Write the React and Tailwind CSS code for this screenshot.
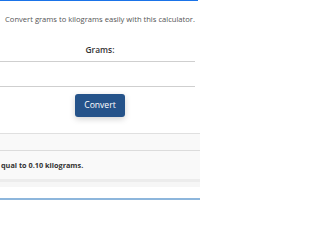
export default function App() {
  return (
    <div
      className="w-[200px] h-[200px] overflow-hidden bg-white flex flex-col"
      style={{ fontFamily: '"Open Sans", "Noto Sans", sans-serif' }}
    >
      <div className="h-px w-[198px] bg-[#1a73e8] shrink-0" />
      <p className="mt-[12px] h-[12px] leading-[12px] text-[7.6px] text-[#555] text-center whitespace-nowrap">
        Convert grams to kilograms easily with this calculator.
      </p>
      <label className="mt-[19px] h-[12px] leading-[12px] text-[8.4px] font-semibold text-[#333] text-center">
        Grams:
      </label>
      <input
        type="text"
        className="mt-[5px] w-[195px] h-[26px] border-y border-[#cfcfcf] bg-white outline-none shrink-0"
      />
      <div className="mt-[7px] flex justify-center">
        <button className="w-[50px] h-[23px] rounded-[3px] bg-[#25538a] text-white text-[8.6px] shadow-[0_2px_6px_rgba(0,0,0,0.18)]">
          Convert
        </button>
      </div>
      <div className="mt-[16px] bg-[#f9f9f9] border-t border-[#e0e0e0] shrink-0">
        <div className="h-[17px] border-b border-[#dcdcdc]" />
        <div className="h-[28px] flex items-center">
          <p className="pl-[1px] whitespace-nowrap text-[7.3px] font-bold text-[#333]">
            qual to 0.10 kilograms.
          </p>
        </div>
      </div>
      <div className="h-[3px] bg-[#ececec] shrink-0" />
      <div className="h-[5px] bg-[#f6f6f6] shrink-0" />
      <div className="h-[11px] shrink-0" />
      <div className="h-[2px] bg-[#8db6dc] shrink-0" />
    </div>
  );
}
